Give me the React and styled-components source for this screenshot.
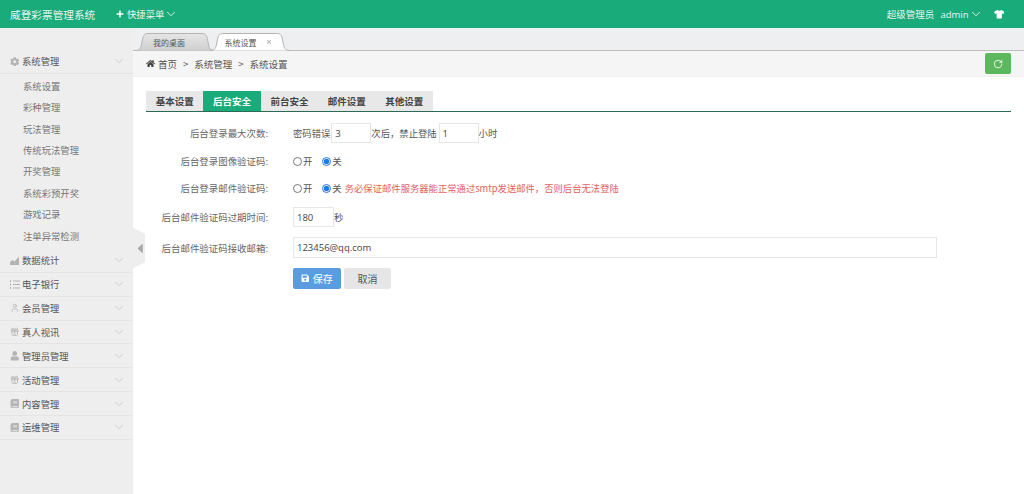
import React from 'react'
import styled, { createGlobalStyle } from 'styled-components'
import { FaCog, FaPlus, FaTshirt, FaHome, FaSave, FaCaretLeft, FaUser, FaBook, FaTimes } from 'react-icons/fa'
import { LuChevronDown, LuGift, LuUser, LuRotateCw } from 'react-icons/lu'

const GlobalStyle = createGlobalStyle`
  html, body {
    margin: 0;
    padding: 0;
    background: #fff;
    overflow: hidden;
  }
  * {
    box-sizing: border-box;
  }
  body {
    font-family: "Noto Sans CJK SC", "Open Sans", sans-serif;
    font-size: 9.33px;
    color: #555;
  }
`

const Page = styled.div`
  width: 1024px;
  height: 494px;
  display: flex;
  flex-direction: column;
  overflow: hidden;
`

const Header = styled.header`
  height: 28px;
  flex: none;
  display: flex;
  align-items: center;
  padding: 0 20px 0 10px;
  background: #1aab7b;
  color: #e6f5ef;
`

const Brand = styled.div`
  font-size: 10.67px;
  width: 106px;
`

const QuickMenu = styled.div`
  display: flex;
  align-items: center;

  & > svg:first-child {
    margin-right: 3px;
    color: #fff;
    font-size: 8px;
  }
`

const UserArea = styled.div`
  margin-left: auto;
  display: flex;
  align-items: center;
  font-size: 9.5px;
`

const AdminName = styled.span`
  margin-left: 6px;
  font-family: "Open Sans", sans-serif;
  font-size: 9.5px;
`

const HeaderArrow = styled(LuChevronDown)`
  font-size: 14px;
  stroke-width: 1.6;
`

const ShirtIcon = styled(FaTshirt)`
  margin-left: 11px;
  color: #fff;
  font-size: 10.5px;
`

const Body = styled.div`
  flex: 1;
  display: flex;
  min-height: 0;
`

const Sidebar = styled.aside`
  width: 133px;
  flex: none;
  padding-top: 22px;
  background: #eeeeee;
`

const MenuRow = styled.div`
  height: 23.87px;
  display: flex;
  align-items: center;
  padding: 0 7.5px 0 10px;
  border-bottom: 1px solid #e4e4e4;
  color: #555;
`

const MenuIcon = styled.span`
  width: 12px;
  display: flex;
  align-items: center;
  color: #b4b4b4;
  font-size: 9.5px;
`

const MenuText = styled.span`
  flex: 1;
`

const MenuArrow = styled(LuChevronDown)`
  color: #c4c4c4;
  font-size: 14px;
  stroke-width: 1.4;
`

const SubList = styled.div`
  padding: 2px 0 2px;
`

const SubItem = styled.div`
  height: 21.4px;
  line-height: 21.4px;
  padding-left: 23px;
  color: #777;
`

const Main = styled.main`
  flex: 1;
  min-width: 0;
  display: flex;
  flex-direction: column;
  position: relative;
`

const CollapseHandle = styled.div`
  position: absolute;
  left: 0;
  top: 200px;
  width: 12px;
  height: 40px;
  display: flex;
  align-items: center;
  padding-left: 2px;
  background: #eeeeee;
  color: #a8a8a8;
  font-size: 15px;
  clip-path: polygon(0 0, 100% 14%, 100% 86%, 0 100%);
`

const TabBar = styled.div`
  height: 23px;
  flex: none;
  display: flex;
  align-items: flex-end;
  padding-left: 2px;
  background: #eeeff1;
  border-bottom: 1px solid #bdbdbd;
`

const PageTab = styled.div`
  position: relative;
  z-index: ${p => (p.$active ? 2 : 1)};
  width: 80px;
  height: 18px;
  margin-bottom: -1px;
  margin-left: ${p => (p.$active ? '-5px' : '0')};
  padding-right: ${p => (p.$active ? '4px' : '12px')};
  display: flex;
  align-items: center;
  justify-content: center;
  gap: 9px;
  font-size: 8px;
  color: #555;

  & > svg:last-child {
    color: #bbb;
    font-size: 6px;
  }
`

const TabShapeSvg = styled.svg`
  position: absolute;
  inset: 0;
  width: 100%;
  height: 100%;
  z-index: -1;
`

const TabShape = ({ active }) => (
  <TabShapeSvg viewBox="0 0 80 18" preserveAspectRatio="none">
    <defs>
      <linearGradient id="tabGrey" x1="0" y1="0" x2="0" y2="1">
        <stop offset="0" stopColor="#e6e6e6" />
        <stop offset="1" stopColor="#cfcfcf" />
      </linearGradient>
    </defs>
    <path
      d="M0 17.5C5 17.5 6 15 7 9C8 3 9 .5 13 .5H67C71 .5 72 3 73 9C74 15 75 17.5 80 17.5"
      fill={active ? '#fff' : 'url(#tabGrey)'}
      stroke="#b4b4b4"
      strokeWidth="1"
    />
  </TabShapeSvg>
)

const Breadcrumb = styled.div`
  height: 26px;
  flex: none;
  display: flex;
  align-items: center;
  padding: 0 13px;
  background: #f5f5f5;
  color: #555;
  font-size: 9.5px;
  border-bottom: 1px solid #f0f0f0;
`

const Crumbs = styled.div`
  flex: 1;
  display: flex;
  align-items: center;
  gap: 6px;

  & > svg {
    font-size: 9px;
    margin-right: -3px;
    color: #444;
  }
`

const RefreshButton = styled.button`
  width: 26px;
  height: 21px;
  padding: 0;
  display: flex;
  align-items: center;
  justify-content: center;
  border: 0;
  border-radius: 2px;
  background: #5cb85c;
  color: #fff;
  font-size: 10px;
`

const Content = styled.div`
  flex: 1;
  padding: 14px 13px 0;
`

const Tabs = styled.div`
  display: flex;
  height: 21px;
  border-bottom: 1px solid #2d6a55;
`

const Tab = styled.div`
  width: 57.4px;
  height: 20px;
  display: flex;
  align-items: center;
  justify-content: center;
  font-weight: 700;
  font-size: 9.5px;
  color: ${p => (p.$active ? '#fff' : '#444')};
  background: ${p => (p.$active ? '#1aab7b' : '#e8e8e8')};
`

const Form = styled.div`
  display: flex;
  flex-direction: column;
  padding-top: 7px;
`

const Row = styled.div`
  height: ${p => p.$h}px;
  display: flex;
  align-items: center;
`

const Label = styled.div`
  width: 122px;
  margin-right: 25px;
  text-align: right;
  font-size: 9.45px;
  color: #666;
`

const Field = styled.div`
  display: flex;
  align-items: center;
  color: #555;
`

const TextInput = styled.input`
  width: ${p => p.$w}px;
  height: ${p => (p.$tall ? 21 : 20)}px;
  margin-left: ${p => p.$gap || 0}px;
  padding: 0 3px;
  border: 1px solid #e6e6e6;
  outline: 0;
  font-family: "Open Sans", sans-serif;
  font-size: 9.5px;
  color: #444;
  background: #fff;
`

const RadioLabel = styled.label`
  display: flex;
  align-items: center;
  margin-right: 10px;
`

const Radio = styled.input`
  width: 9px;
  height: 9px;
  margin: 0 1px 0 0;
  accent-color: #1e78e6;
`

const Warning = styled.span`
  margin-left: -7px;
  color: #e56060;
`

const Button = styled.button`
  height: 21px;
  width: ${p => p.$w}px;
  margin-right: 3px;
  display: flex;
  align-items: center;
  justify-content: center;
  gap: 3px;
  border: 0;
  border-radius: 2px;
  font-family: inherit;
  font-size: 10px;
  color: ${p => (p.$primary ? '#fff' : '#555')};
  background: ${p => (p.$primary ? '#5b9ce0' : '#e6e6e6')};

  & > svg {
    font-size: 8.5px;
  }
`

const AreaIcon = () => (
  <svg width="10" height="9" viewBox="0 0 10 9" fill="currentColor">
    <path d="M0 9V6l2.5-2 2 1.5L9 .5V9z" />
  </svg>
)

const ListIcon = () => (
  <svg width="10" height="9" viewBox="0 0 10 9" fill="none" stroke="currentColor" strokeWidth="1">
    <path d="M3 1h7M3 4.5h7M3 8h7M.5 0v2M.5 3.5v2M.5 7v2" />
  </svg>
)

const subItems = ['系统设置', '彩种管理', '玩法管理', '传统玩法管理', '开奖管理', '系统彩预开奖', '游戏记录', '注单异常检测']

const menus = [
  { text: '数据统计', icon: <AreaIcon /> },
  { text: '电子银行', icon: <ListIcon /> },
  { text: '会员管理', icon: <LuUser /> },
  { text: '真人视讯', icon: <LuGift /> },
  { text: '管理员管理', icon: <FaUser /> },
  { text: '活动管理', icon: <LuGift /> },
  { text: '内容管理', icon: <FaBook /> },
  { text: '运维管理', icon: <FaBook /> },
]

const formTabs = ['基本设置', '后台安全', '前台安全', '邮件设置', '其他设置']

export default function App() {
  return (
    <Page>
      <GlobalStyle />
      <Header>
        <Brand>威登彩票管理系统</Brand>
        <QuickMenu>
          <FaPlus />
          快捷菜单
          <HeaderArrow />
        </QuickMenu>
        <UserArea>
          超级管理员
          <AdminName>admin</AdminName>
          <HeaderArrow />
          <ShirtIcon />
        </UserArea>
      </Header>
      <Body>
        <Sidebar>
          <MenuRow>
            <MenuIcon><FaCog /></MenuIcon>
            <MenuText>系统管理</MenuText>
            <MenuArrow />
          </MenuRow>
          <SubList>
            {subItems.map(item => <SubItem key={item}>{item}</SubItem>)}
          </SubList>
          {menus.map(menu => (
            <MenuRow key={menu.text}>
              <MenuIcon>{menu.icon}</MenuIcon>
              <MenuText>{menu.text}</MenuText>
              <MenuArrow />
            </MenuRow>
          ))}
        </Sidebar>
        <Main>
          <CollapseHandle><FaCaretLeft /></CollapseHandle>
          <TabBar>
            <PageTab><TabShape />我的桌面</PageTab>
            <PageTab $active><TabShape active />系统设置<FaTimes /></PageTab>
          </TabBar>
          <Breadcrumb>
            <Crumbs>
              <FaHome />
              <span>首页</span>
              <span>&gt;</span>
              <span>系统管理</span>
              <span>&gt;</span>
              <span>系统设置</span>
            </Crumbs>
            <RefreshButton><LuRotateCw /></RefreshButton>
          </Breadcrumb>
          <Content>
            <Tabs>
              {formTabs.map((t, i) => <Tab key={t} $active={i === 1}>{t}</Tab>)}
            </Tabs>
            <Form>
              <Row $h={28}>
                <Label>后台登录最大次数:</Label>
                <Field>
                  密码错误
                  <TextInput $w={40} $gap={1} defaultValue="3" />
                  次后，禁止登陆
                  <TextInput $w={40} $gap={2} defaultValue="1" />
                  小时
                </Field>
              </Row>
              <Row $h={28}>
                <Label>后台登录图像验证码:</Label>
                <Field>
                  <RadioLabel><Radio type="radio" name="image" />开</RadioLabel>
                  <RadioLabel><Radio type="radio" name="image" defaultChecked />关</RadioLabel>
                </Field>
              </Row>
              <Row $h={26}>
                <Label>后台登录邮件验证码:</Label>
                <Field>
                  <RadioLabel><Radio type="radio" name="mail" />开</RadioLabel>
                  <RadioLabel><Radio type="radio" name="mail" defaultChecked />关</RadioLabel>
                  <Warning>务必保证邮件服务器能正常通过smtp发送邮件，否则后台无法登陆</Warning>
                </Field>
              </Row>
              <Row $h={32}>
                <Label>后台邮件验证码过期时间:</Label>
                <Field>
                  <TextInput $w={41} defaultValue="180" />
                  秒
                </Field>
              </Row>
              <Row $h={29}>
                <Label>后台邮件验证码接收邮箱:</Label>
                <Field>
                  <TextInput $w={644} $tall defaultValue="123456@qq.com" />
                </Field>
              </Row>
              <Row $h={33}>
                <Label />
                <Field>
                  <Button $w={48} $primary><FaSave />保存</Button>
                  <Button $w={47}>取消</Button>
                </Field>
              </Row>
            </Form>
          </Content>
        </Main>
      </Body>
    </Page>
  )
}
